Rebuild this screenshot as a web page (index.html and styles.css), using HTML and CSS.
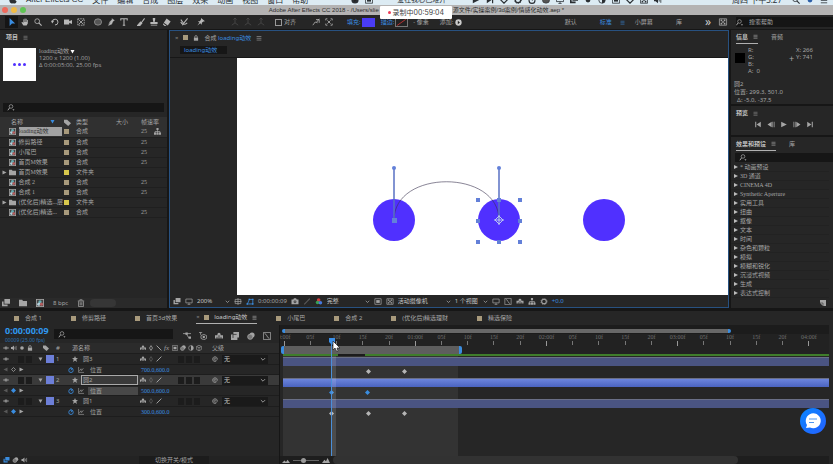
FILE: index.html
```html
<!DOCTYPE html>
<html lang="zh-CN">
  <head>
    <meta charset="UTF-8" />
    <title>After Effects - loading动效</title>
    <link rel="stylesheet" href="styles.css">
  </head>
  <body>
    <!-- icon set -->
    <svg class="defs" width="0" height="0">
      <symbol id="menu" viewBox="0 0 10 10"><path d="M1 2.500h8M1 5.500h8M1 8.500h8" stroke="currentColor" /></symbol>
      <symbol id="arrow" viewBox="0 0 10 10"><path d="M2 0v10l3-3h4z" fill="currentColor" /></symbol>
      <symbol id="hand" viewBox="0 0 10 10"><path d="M3 9.500L.500 5.500l1-.5L3 6V1.500h1V5h.500V.500h1V5H6V1h1v4h.500V2.500h1V7L7 9.500z" fill="currentColor" /></symbol>
      <symbol id="zoom" viewBox="0 0 10 10"><circle cx="4" cy="4" r="3" fill="none" stroke="currentColor" /><path d="M6 6l3.500 3.500" stroke="currentColor" stroke-width="1.400" /></symbol>
      <symbol id="find" viewBox="0 0 10 10"><circle cx="5" cy="3.500" r="2.600" fill="none" stroke="currentColor" /><path d="M3 5.500L.500 9" stroke="currentColor" stroke-width="1.400" /><path d="M7 7.500h3L8.500 9.500z" fill="currentColor" /></symbol>
      <symbol id="rotate" viewBox="0 0 10 10"><path d="M1.500 5A3.600 3.600 0 1 1 5 8.700" fill="none" stroke="currentColor" stroke-width="1.200" /><path d="M0 3.500h4L1.500 7z" fill="currentColor" /></symbol>
      <symbol id="camera" viewBox="0 0 10 10"><path d="M0 2h6.500v2L10 2.500v5L6.500 6v2H0z" fill="currentColor" /></symbol>
      <symbol id="pan" viewBox="0 0 10 10"><rect x="1" y="1" width="8" height="8" fill="none" stroke="currentColor" stroke-dasharray="2 1" /><path d="M2 2l6 6M8 2L2 8" stroke="currentColor" /></symbol>
      <symbol id="ellipse" viewBox="0 0 10 10"><ellipse cx="5" cy="5" rx="4.500" ry="4" fill="#555" stroke="currentColor" stroke-width=".7" /></symbol>
      <symbol id="pen" viewBox="0 0 10 10"><path d="M6 0l4 3-2 1-2 4-5 2 2-5 3-3zM1 9.500l3-4" fill="currentColor" stroke="#262626" stroke-width=".4" /></symbol>
      <symbol id="type" viewBox="0 0 10 10"><path d="M1 3V1h8v2M5 1v8M3.500 9h3" fill="none" stroke="currentColor" stroke-width="1.300" /></symbol>
      <symbol id="brush" viewBox="0 0 10 10"><path d="M9.500.500L5 6.500M4.500 5L6 6.500 3.500 9.500.500 9.500z" fill="currentColor" stroke="currentColor" stroke-width="1.300" /></symbol>
      <symbol id="stamp" viewBox="0 0 10 10"><path d="M3.500 0h3v2l-.7 3H9.500v2.500h-9V5h3.700l-.7-3zM1 8.500h8v1H1z" fill="currentColor" /></symbol>
      <symbol id="eraser" viewBox="0 0 10 10"><path d="M4.500.500l5 4L6 9.500 1 6z" fill="currentColor" /><path d="M0 6.500l4.500 3.500H2L0 8z" fill="currentColor" /></symbol>
      <symbol id="roto" viewBox="0 0 10 10"><path d="M9.500.500L5 6 3 9M1 2l3 4M1 5c1 3 5 4 8 1" fill="none" stroke="currentColor" stroke-width="1.300" /></symbol>
      <symbol id="pin" viewBox="0 0 10 10"><path d="M5 0l5 4-2 .5L6 6v2.500L4 6.500.500 9.500 3 5.500 1 4h2.500L5 2z" fill="currentColor" /></symbol>
      <symbol id="axis" viewBox="0 0 10 10"><path d="M5 0v6L1 9M5 6l4 3M3 2l2-2 2 2" fill="none" stroke="currentColor" /></symbol>
      <symbol id="snap" viewBox="0 0 10 10"><path d="M1 9l3-4 3 1M5 2h4v4M9 1L6 5" fill="none" stroke="currentColor" /></symbol>
      <symbol id="corners" viewBox="0 0 10 10"><path d="M1 3V1h2M7 1h2v2M9 7v2H7M3 9H1V7M3 3l4 4M7 3L3 7" fill="none" stroke="currentColor" /></symbol>
      <symbol id="add" viewBox="0 0 10 10"><circle cx="5" cy="5" r="4.500" fill="currentColor" /><path d="M4 2.500L7 5 4 7.500z" fill="#222" /></symbol>
      <symbol id="down" viewBox="0 0 10 10"><path d="M1.500 3.500L5 7l3.500-3.500" fill="none" stroke="currentColor" stroke-width="1.200" /></symbol>
      <symbol id="lock" viewBox="0 0 10 10"><path d="M3 5V3a2 2 0 0 1 4 0v2" fill="none" stroke="currentColor" stroke-width="1.300" /><rect x="1.500" y="4.500" width="7" height="5" fill="currentColor" /></symbol>
      <symbol id="tag" viewBox="0 0 10 10"><path d="M0 1h4.500L10 6 6 10 0 5z" fill="currentColor" /></symbol>
      <symbol id="comp" viewBox="0 0 10 10"><path d="M0 0h10v10H0z" fill="#a8a8a8" /><path d="M1 1h8v8H1z" fill="#444" /><circle cx="5" cy="3.500" r="2" fill="#68aeb4" /><circle cx="3.500" cy="6.500" r="2" fill="#b3d3df" /><circle cx="6.800" cy="6.500" r="2" fill="#b65f60" /></symbol>
      <symbol id="folder" viewBox="0 0 10 10"><path d="M0 1h4l1 1.500h5V9H0z" fill="currentColor" /></symbol>
      <symbol id="tree" viewBox="0 0 10 10"><path d="M3.500 0h3v3h-3zM0 6.500h3v3H0zM7 6.500h3v3H7zM3.500 6.500h3v3h-3z" fill="currentColor" /><path d="M5 3v4M1.500 7V5h7v2" fill="none" stroke="currentColor" /></symbol>
      <symbol id="right" viewBox="0 0 10 10"><path d="M1 1l8 4-8 4z" fill="currentColor" /></symbol>
      <symbol id="left" viewBox="0 0 10 10"><path d="M9 1L1 5l8 4z" fill="currentColor" /></symbol>
      <symbol id="fold" viewBox="0 0 10 10"><path d="M1 2h8L5 9z" fill="currentColor" /></symbol>
      <symbol id="first" viewBox="0 0 10 10"><path d="M1 1h1.500v8H1zM9 1v8L3 5z" fill="currentColor" /></symbol>
      <symbol id="back" viewBox="0 0 10 10"><path d="M6 1v8L0 5zM7 1h1v8H7zM9 1h1v8H9z" fill="currentColor" /></symbol>
      <symbol id="fwd" viewBox="0 0 10 10"><path d="M4 1v8l6-4zM0 1h1v8H0zM2 1h1v8H2z" fill="currentColor" /></symbol>
      <symbol id="last" viewBox="0 0 10 10"><path d="M1 1v8l6-4zM7.500 1H9v8H7.500z" fill="currentColor" /></symbol>
      <symbol id="layers" viewBox="0 0 10 10"><path d="M3 0h7v6H3zM0 3h2v4h5v2H0z" fill="currentColor" /></symbol>
      <symbol id="screen" viewBox="0 0 10 10"><path d="M.500 1.500h9v5.500h-9zM3 9.500h4M5 7v2" fill="none" stroke="currentColor" /></symbol>
      <symbol id="grid" viewBox="0 0 10 10"><path d="M1 2h8v6H1zM5 0v10M0 5h10" fill="none" stroke="currentColor" /></symbol>
      <symbol id="mask" viewBox="0 0 10 10"><path d="M1 8.500h8V2H4Q3 6 1 8.500z" fill="none" stroke="currentColor" stroke-width="1.200" /><path d="M0 7.500h2v2H0zM8 7.500h2v2H8zM8 1h2v2H8zM3 1h2v2H3z" fill="currentColor" /></symbol>
      <symbol id="photo" viewBox="0 0 10 10"><path d="M0 2h2.500l1-1.500h3l1 1.500H10v7H0z" fill="currentColor" /><circle cx="5" cy="5.500" r="2" fill="#333" /><circle cx="5" cy="5.500" r="1" fill="currentColor" /></symbol>
      <symbol id="rgb" viewBox="0 0 10 10"><circle cx="4.500" cy="3" r="2.600" fill="#d23c3c" /><circle cx="3" cy="6.500" r="2.600" fill="#3aa052" /><circle cx="7" cy="6.800" r="2.600" fill="#4478e0" /></symbol>
      <symbol id="box" viewBox="0 0 10 10"><path d="M.500 1h9v8h-9z" fill="none" stroke="currentColor" /><path d="M2.500 3h5v4h-5z" fill="currentColor" /></symbol>
      <symbol id="checker" viewBox="0 0 10 10"><path d="M.500 1h9v8h-9z" fill="none" stroke="currentColor" /><path d="M2 2h2v2H2zM6 2h2v2H6zM4 4h2v2H4zM2 6h2v2H2zM6 6h2v2H6z" fill="currentColor" /></symbol>
      <symbol id="gear" viewBox="0 0 10 10"><circle cx="5" cy="5" r="3.300" fill="none" stroke="currentColor" stroke-width="1.500" /><circle cx="5" cy="5" r="4.400" fill="none" stroke="currentColor" stroke-dasharray="1.500 1.300" /></symbol>
      <symbol id="trash" viewBox="0 0 10 10"><path d="M1 2.500h8M3.500 2V1h3v1M2 3v6.500h6V3M4 4v4M6 4v4" fill="none" stroke="currentColor" /></symbol>
      <symbol id="flow" viewBox="0 0 10 10"><path d="M0 2h4l3 5h1M4 2h6" fill="none" stroke="currentColor" /><path d="M3 .500h3v3H3zM7 5.500h3v3H7z" fill="currentColor" /></symbol>
      <symbol id="cube" viewBox="0 0 10 10"><path d="M5 .500l4 2v5l-4 2-4-2v-5zM1 2.500l4 2 4-2M5 4.500v5" fill="none" stroke="currentColor" /></symbol>
      <symbol id="orbit" viewBox="0 0 10 10"><path d="M0 .500h4M2 .500v3" stroke="currentColor" /><path d="M6 3l3.500 1.500v3.500L6 9.700 2.500 8V4.500z" fill="none" stroke="currentColor" /><circle cx="6" cy="6.300" r="1.500" fill="currentColor" /></symbol>
      <symbol id="shy" viewBox="0 0 10 10"><path d="M3 3a2 2 0 0 1 4 0v1h3v4H0V4h3z" fill="currentColor" /><path d="M5 4v5M2.500 6v3M7.500 6v3" stroke="#262626" /></symbol>
      <symbol id="blend" viewBox="0 0 10 10"><path d="M3 0h7v7H8v3H0V3h3z" fill="currentColor" /><path d="M2.500 7.500V3H7" fill="none" stroke="#333" /></symbol>
      <symbol id="blur" viewBox="0 0 10 10"><circle cx="6.300" cy="3.700" r="3.200" fill="currentColor" /><circle cx="4" cy="6" r="3.200" fill="#777" stroke="currentColor" /></symbol>
      <symbol id="graph" viewBox="0 0 10 10"><path d="M.500.500h9v9h-9zM2 2c3 0 3 6 6 6" fill="none" stroke="currentColor" /></symbol>
      <symbol id="eye" viewBox="0 0 10 10"><path d="M.500 5Q5 .500 9.500 5 5 9.500.500 5z" fill="none" stroke="currentColor" /><circle cx="5" cy="5" r="1.600" fill="currentColor" /></symbol>
      <symbol id="sound" viewBox="0 0 10 10"><path d="M0 3.500h2L5 1v8L2 6.500H0z" fill="currentColor" /><path d="M6.500 3v4M8.500 1.500v7" stroke="currentColor" /></symbol>
      <symbol id="dot" viewBox="0 0 10 10"><circle cx="5" cy="5" r="3" fill="currentColor" /></symbol>
      <symbol id="star" viewBox="0 0 10 10"><path d="M5 0l1.400 3.500L10 3.800 7.200 6 8.200 9.800 5 7.700 1.800 9.800 2.800 6 0 3.800l3.600-.3z" fill="currentColor" /></symbol>
      <symbol id="sun" viewBox="0 0 10 10"><path d="M5 1l2.500 4L5 9 2.500 5z" fill="none" stroke="currentColor" stroke-width="1.300" /></symbol>
      <symbol id="slash" viewBox="0 0 10 10"><path d="M1 9l8-8" stroke="currentColor" stroke-width="1.600" /></symbol>
      <symbol id="bslash" viewBox="0 0 10 10"><path d="M1 1l8 8" stroke="currentColor" stroke-width="1.600" /></symbol>
      <symbol id="half" viewBox="0 0 10 10"><circle cx="5" cy="5" r="4" fill="none" stroke="currentColor" /><path d="M5 1a4 4 0 0 1 0 8z" fill="currentColor" /></symbol>
      <symbol id="watch" viewBox="0 0 10 10"><circle cx="5" cy="5.500" r="3.700" fill="none" stroke="currentColor" stroke-width="1.400" /><path d="M4 .500h2M5 5.500l2.500-3.500" stroke="currentColor" stroke-width="1.400" /></symbol>
      <symbol id="chart" viewBox="0 0 10 10"><path d="M1 0v9h9M2 7l3-4 1 3 3-4" fill="none" stroke="currentColor" /></symbol>
      <symbol id="whip" viewBox="0 0 10 10"><path d="M7 5a2 2 0 1 0-2 2c2 0 3 0 4-1M9 5.500A4 4 0 1 0 7 8.700" fill="none" stroke="currentColor" stroke-width="1.200" /></symbol>
      <symbol id="key" viewBox="0 0 10 10"><path d="M5 0l5 5-5 5-5-5z" fill="currentColor" /></symbol>
      <symbol id="keyo" viewBox="0 0 10 10"><path d="M5 1l4 4-4 4-4-4z" fill="none" stroke="currentColor" stroke-width="1.500" /></symbol>
      <symbol id="page" viewBox="0 0 10 10"><path d="M0 0h10v10H5L0 5z" fill="currentColor" /><path d="M5 10V5H0" fill="none" stroke="#333" /></symbol>
      <symbol id="apple" viewBox="0 0 10 10"><path d="M5 2.500C2 1 0 3 .500 6S3 10 5 9c2 1 4 0 4.500-2.500C7 5.500 8 3 9 3 8 1.500 6 2 5 2.500z" fill="currentColor" /></symbol>
    </svg>

    <nav class="menubar">
      <svg class="ico"><use href="#apple" /></svg>
      <a href="#" class="app">After Effects CC</a>
      <a href="#">文件</a><a href="#">编辑</a><a href="#">合成</a><a href="#">图层</a><a href="#">效果</a><a href="#">动画</a><a href="#">视图</a><a href="#">窗口</a><a href="#">帮助</a>
      <div class="status">
        <svg class="ico"><use href="#add" /></svg>
        <svg class="ico"><use href="#box" /></svg>
        <span class="song">爱在我心已难开</span>
        <svg class="ico"><use href="#right" /></svg>
        <svg class="ico"><use href="#last" /></svg>
        <svg class="ico"><use href="#keyo" /></svg>
        <svg class="ico"><use href="#gear" /></svg>
        <svg class="ico"><use href="#watch" /></svg>
        <svg class="ico"><use href="#ellipse" /></svg>
        <svg class="ico"><use href="#screen" /></svg>
        <svg class="ico"><use href="#layers" /></svg>
        <svg class="ico"><use href="#dot" /></svg>
        <svg class="ico"><use href="#half" /></svg>
        <svg class="ico"><use href="#box" /></svg>
        <svg class="ico"><use href="#keyo" /></svg>
        <svg class="ico"><use href="#checker" /></svg>
        <svg class="ico"><use href="#sound" /></svg>
        <span class="clock">周四 下午3:27</span>
        <svg class="ico"><use href="#zoom" /></svg>
        <svg class="ico siri"><use href="#dot" /></svg>
        <svg class="ico"><use href="#menu" /></svg>
      </div>
    </nav>

    <header class="titlebar">
      <div class="lights"><i class="red"></i><i class="amber"></i><i class="green"></i></div>
      <span>Adobe After Effects CC 2018 - /Users/slie</span>
      <div class="rec"><i></i>录制中00:59:04</div>
      <span>源文件/实操案例/3d案例/情感化动效.aep *</span>
    </header>

    <div class="toolbar">
      <div class="tools">
        <button class="on"><svg class="ico"><use href="#arrow" /></svg></button><button><svg class="ico"><use href="#hand" /></svg></button><button><svg class="ico"><use href="#zoom" /></svg></button>
      </div>
      <div class="tools">
        <button><svg class="ico"><use href="#rotate" /></svg></button><button><svg class="ico"><use href="#camera" /></svg></button><button><svg class="ico"><use href="#pan" /></svg></button>
      </div>
      <div class="tools">
        <button><svg class="ico"><use href="#ellipse" /></svg></button><button><svg class="ico"><use href="#pen" /></svg></button><button><svg class="ico"><use href="#type" /></svg></button>
      </div>
      <div class="tools">
        <button><svg class="ico"><use href="#brush" /></svg></button><button><svg class="ico"><use href="#stamp" /></svg></button><button><svg class="ico"><use href="#eraser" /></svg></button>
      </div>
      <div class="tools"><button><svg class="ico"><use href="#roto" /></svg></button></div>
      <div class="tools"><button><svg class="ico"><use href="#pin" /></svg></button></div>
      <div class="tools dim">
        <button><svg class="ico"><use href="#axis" /></svg></button><button><svg class="ico"><use href="#axis" /></svg></button><button><svg class="ico"><use href="#axis" /></svg></button>
      </div>
      <label class="check"><input type="checkbox">对齐</label>
      <div class="tools">
        <button><svg class="ico"><use href="#snap" /></svg></button><button><svg class="ico"><use href="#corners" /></svg></button>
      </div>
      <div class="fills">
        <a href="#">填充:</a><button class="fill"></button>
        <a href="#" class="stroke">描边:</a><button class="none"><svg viewBox="0 0 12 8"><path d="M1 7.500L11 .500" stroke="#c33" /></svg></button>
        <span class="px">- 像素</span><span class="plus">添加:</span><svg class="ico"><use href="#add" /></svg>
      </div>
      <div class="spaces">
        <button>默认</button>
        <button class="cur">标准 <svg class="ico"><use href="#menu" /></svg></button>
        <button>小屏幕</button>
        <button>库</button>
        <button class="more">»</button>
        <svg class="ico sync"><use href="#checker" /></svg>
      </div>
      <label class="help"><svg class="ico"><use href="#find" /></svg><input type="text" placeholder="搜索帮助"></label>
    </div>

    <main class="work">
      <section class="panel project">
        <div class="tabs"><b>项目</b><svg class="ico"><use href="#menu" /></svg></div>
        <div class="preview">
          <div class="thumb"><i></i><i></i><i></i></div>
          <div>
            <p>loading动效 <svg class="ico"><use href="#fold" /></svg></p>
            <p class="lt">1200 x 1200 (1.00)</p>
            <p class="lt">Δ 0:00:05:00, 25.00 fps</p>
          </div>
        </div>
        <label class="search"><svg class="ico"><use href="#find" /></svg><input type="text" aria-label="搜索项目"></label>
        <table class="files">
          <thead>
            <tr><th class="c-arr"></th><th class="c-name" colspan="2">名称 <svg class="ico blue"><use href="#fold" /></svg></th><th class="c-tag"><svg class="ico"><use href="#tag" /></svg></th><th class="c-type">类型</th><th class="c-size">大小</th><th class="c-rate" colspan="2">帧速率</th></tr>
          </thead>
          <tbody>
            <tr class="sel"><td></td><td><svg class="ico"><use href="#comp" /></svg></td><td class="nm"><span>loading动效</span></td><td><i class="chip"></i></td><td>合成</td><td></td><td>25</td><td><svg class="ico"><use href="#tree" /></svg></td></tr>
            <tr><td></td><td><svg class="ico"><use href="#comp" /></svg></td><td class="nm"><span>修剪路径</span></td><td><i class="chip"></i></td><td>合成</td><td></td><td>25</td><td></td></tr>
            <tr><td></td><td><svg class="ico"><use href="#comp" /></svg></td><td class="nm"><span>小尾巴</span></td><td><i class="chip"></i></td><td>合成</td><td></td><td>25</td><td></td></tr>
            <tr><td></td><td><svg class="ico"><use href="#comp" /></svg></td><td class="nm"><span>首页M效果</span></td><td><i class="chip"></i></td><td>合成</td><td></td><td>25</td><td></td></tr>
            <tr><td><svg class="ico tri"><use href="#right" /></svg></td><td><svg class="ico"><use href="#folder" /></svg></td><td class="nm"><span>首页M效果</span></td><td><i class="chip yel"></i></td><td>文件夹</td><td></td><td></td><td></td></tr>
            <tr><td></td><td><svg class="ico"><use href="#comp" /></svg></td><td class="nm"><span>合成 2</span></td><td><i class="chip"></i></td><td>合成</td><td></td><td>25</td><td></td></tr>
            <tr><td></td><td><svg class="ico"><use href="#comp" /></svg></td><td class="nm"><span>合成 1</span></td><td><i class="chip"></i></td><td>合成</td><td></td><td>25</td><td></td></tr>
            <tr><td><svg class="ico tri"><use href="#right" /></svg></td><td><svg class="ico"><use href="#folder" /></svg></td><td class="nm"><span>(优化后)精选...层</span></td><td><i class="chip yel"></i></td><td>文件夹</td><td></td><td></td><td></td></tr>
            <tr><td></td><td><svg class="ico"><use href="#comp" /></svg></td><td class="nm"><span>(优化后)精选...</span></td><td><i class="chip"></i></td><td>合成</td><td></td><td>25</td><td></td></tr>
          </tbody>
        </table>
        <div class="foot">
          <svg class="ico"><use href="#layers" /></svg>
          <svg class="ico"><use href="#folder" /></svg>
          <svg class="ico"><use href="#comp" /></svg>
          <span>8 bpc</span>
          <svg class="ico"><use href="#trash" /></svg>
          <i class="scroll"></i>
        </div>
      </section>

      <section class="panel viewer">
        <div class="tabs">
          <span class="x">×</span><i class="chip"></i><svg class="ico"><use href="#lock" /></svg>
          <span>合成 <a href="#">loading动效</a></span><svg class="ico"><use href="#menu" /></svg>
        </div>
        <div class="crumb"><a href="#">loading动效</a></div>
        <div class="stage">
          <svg>
            <g fill="#5030ff"><circle cx="157" cy="162" r="21" /><circle cx="262" cy="162" r="21" /><circle cx="367" cy="162" r="21" /></g>
            <path d="M157 162C157 111 262 111 262 162" fill="none" stroke="#39324f" stroke-opacity=".75" stroke-width=".8" />
            <g fill="#6380d8">
              <path d="M157 111v51M262 111v51" stroke="#5a72c4" stroke-width="1.500" />
              <circle cx="157" cy="110" r="2" /><circle cx="262" cy="110" r="2" />
              <path d="M155 160h5v5h-5z" />
              <path d="M239 140h4v4h-4zM260 140h4v4h-4zM281 140h4v4h-4zM239 161h4v4h-4zM281 161h4v4h-4zM239 182h4v4h-4zM260 182h4v4h-4zM281 182h4v4h-4z" />
            </g>
            <path d="M262 158l4 4-4 4-4-4zM262 157v10M257 162h10" fill="none" stroke="#b9c6f0" />
          </svg>
        </div>
        <div class="foot">
          <svg class="ico"><use href="#layers" /></svg>
          <svg class="ico"><use href="#screen" /></svg>
          <label class="pick w1"><select aria-label="放大率"><option>200%</option></select><svg class="ico"><use href="#down" /></svg></label>
          <svg class="ico"><use href="#grid" /></svg>
          <svg class="ico blue"><use href="#mask" /></svg>
          <span class="tc">0:00:00:09</span>
          <svg class="ico"><use href="#photo" /></svg>
          <svg class="ico off"><use href="#slash" /></svg>
          <svg class="ico"><use href="#rgb" /></svg>
          <label class="pick w2"><select aria-label="分辨率"><option>完整</option></select><svg class="ico"><use href="#down" /></svg></label>
          <svg class="ico"><use href="#box" /></svg>
          <svg class="ico"><use href="#checker" /></svg>
          <label class="pick w3"><select aria-label="3D 视图"><option>活动摄像机</option></select><svg class="ico"><use href="#down" /></svg></label>
          <label class="pick w1"><select aria-label="视图布局"><option>1 个视图</option></select><svg class="ico"><use href="#down" /></svg></label>
          <svg class="ico"><use href="#screen" /></svg>
          <svg class="ico"><use href="#graph" /></svg>
          <svg class="ico"><use href="#shy" /></svg>
          <svg class="ico"><use href="#tree" /></svg>
          <svg class="ico"><use href="#gear" /></svg>
          <a href="#">+0.0</a>
        </div>
      </section>

      <aside class="side">
        <section class="panel info">
          <div class="tabs"><b class="act">信息 <svg class="ico"><use href="#menu" /></svg></b><span>音频</span></div>
          <div class="values">
            <i class="sample"></i>
            <p>R:<br>G:<br>B:<br>A: &nbsp;0</p>
            <span class="cross">+</span>
            <p>X: 266<br>Y: 741</p>
          </div>
          <div class="sel-info">圆2<br>位置: 299.3, 501.0<br>&nbsp; Δ: -5.0, -37.5</div>
        </section>
        <section class="panel play">
          <div class="tabs"><b>预览</b><svg class="ico"><use href="#menu" /></svg></div>
          <div class="btns">
            <button><svg class="ico"><use href="#first" /></svg></button><button><svg class="ico"><use href="#back" /></svg></button><button><svg class="ico"><use href="#right" /></svg></button><button><svg class="ico"><use href="#fwd" /></svg></button><button><svg class="ico"><use href="#last" /></svg></button>
          </div>
        </section>
        <section class="panel effects">
          <div class="tabs"><b class="act">效果和预设 <svg class="ico"><use href="#menu" /></svg></b><span>库</span></div>
          <label class="search"><svg class="ico"><use href="#find" /></svg><input type="text" aria-label="搜索效果"></label>
          <ul>
            <li>* 动画预设</li>
            <li>3D 通道</li>
            <li>CINEMA 4D</li>
            <li>Synthetic Aperture</li>
            <li>实用工具</li>
            <li>扭曲</li>
            <li>抠像</li>
            <li>文本</li>
            <li>时间</li>
            <li>杂色和颗粒</li>
            <li>模拟</li>
            <li>模糊和锐化</li>
            <li>沉浸式视频</li>
            <li>生成</li>
            <li>表达式控制</li>
          </ul>
          <div class="foot"><svg class="ico"><use href="#page" /></svg></div>
        </section>
      </aside>
    </main>

    <section class="timeline">
      <div class="comps">
        <a href="#"><i class="chip"></i>合成 1</a>
        <a href="#"><i class="chip"></i>修剪路径</a>
        <a href="#"><i class="chip"></i>首页3d效果</a>
        <a href="#" class="act"><span class="x">×</span><i class="chip"></i>loading动效<svg class="ico"><use href="#menu" /></svg></a>
        <a href="#"><i class="chip"></i>小尾巴</a>
        <a href="#"><i class="chip"></i>合成 2</a>
        <a href="#"><i class="chip"></i>(优化后)精选理财</a>
        <a href="#"><i class="chip"></i>精选保险</a>
      </div>

      <div class="layers">
        <div class="ctrl">
          <div class="time"><b>0:00:00:09</b><small>00009 (25.00 fps)</small></div>
          <label class="search"><svg class="ico"><use href="#find" /></svg><input type="text" aria-label="搜索图层"></label>
          <div class="modes">
            <button><svg class="ico"><use href="#flow" /></svg></button><button><svg class="ico"><use href="#orbit" /></svg></button><button><svg class="ico"><use href="#shy" /></svg></button><button><svg class="ico"><use href="#blend" /></svg></button><button><svg class="ico"><use href="#blur" /></svg></button><button><svg class="ico"><use href="#graph" /></svg></button>
          </div>
        </div>
        <div class="row head">
          <span class="av"><svg class="ico"><use href="#eye" /></svg><svg class="ico"><use href="#sound" /></svg><svg class="ico"><use href="#dot" /></svg><svg class="ico"><use href="#lock" /></svg></span>
          <span class="lab"><svg class="ico"><use href="#tag" /></svg></span>
          <span class="no">#</span>
          <span class="src">源名称</span>
          <span class="sw"><svg class="ico"><use href="#shy" /></svg><svg class="ico"><use href="#sun" /></svg><svg class="ico"><use href="#bslash" /></svg><em>fx</em><svg class="ico"><use href="#box" /></svg><svg class="ico"><use href="#blur" /></svg><svg class="ico"><use href="#half" /></svg><svg class="ico"><use href="#cube" /></svg></span>
          <span class="par">父级</span>
        </div>
        <div class="row layer">
          <span class="av"><svg class="ico"><use href="#eye" /></svg><i></i><i></i></span>
          <span class="lab"><svg class="ico tri"><use href="#fold" /></svg><i class="chip vio"></i></span>
          <span class="no">1</span>
          <span class="src"><svg class="ico"><use href="#star" /></svg><span class="nm">圆3</span></span>
          <span class="sw"><svg class="ico"><use href="#shy" /></svg><svg class="ico off"><use href="#sun" /></svg><svg class="ico"><use href="#slash" /></svg><i class="first"></i><i></i><i></i></span>
          <span class="par"><svg class="ico"><use href="#whip" /></svg><label class="pick"><select aria-label="圆3 父级"><option>无</option></select><svg class="ico"><use href="#down" /></svg></label></span>
        </div>
        <div class="row prop">
          <span class="nav"><svg class="ico off"><use href="#left" /></svg><svg class="ico"><use href="#keyo" /></svg><svg class="ico"><use href="#right" /></svg></span>
          <span class="pn"><svg class="ico blue"><use href="#watch" /></svg><svg class="ico"><use href="#chart" /></svg><span class="nm">位置</span></span>
          <a href="#">700.0,600.0</a>
        </div>
        <div class="row layer sel">
          <span class="av"><svg class="ico"><use href="#eye" /></svg><i></i><i></i></span>
          <span class="lab"><svg class="ico tri"><use href="#fold" /></svg><i class="chip vio"></i></span>
          <span class="no">2</span>
          <span class="src"><svg class="ico"><use href="#star" /></svg><span class="nm">圆2</span></span>
          <span class="sw"><svg class="ico"><use href="#shy" /></svg><svg class="ico off"><use href="#sun" /></svg><svg class="ico"><use href="#slash" /></svg><i class="first"></i><i></i><i></i></span>
          <span class="par"><svg class="ico"><use href="#whip" /></svg><label class="pick"><select aria-label="圆2 父级"><option>无</option></select><svg class="ico"><use href="#down" /></svg></label></span>
        </div>
        <div class="row prop sel">
          <span class="nav"><svg class="ico off"><use href="#left" /></svg><svg class="ico blue"><use href="#key" /></svg><svg class="ico"><use href="#right" /></svg></span>
          <span class="pn"><svg class="ico blue"><use href="#watch" /></svg><svg class="ico"><use href="#chart" /></svg><span class="nm">位置</span></span>
          <a href="#">500.0,600.0</a>
        </div>
        <div class="row layer">
          <span class="av"><svg class="ico"><use href="#eye" /></svg><i></i><i></i></span>
          <span class="lab"><svg class="ico tri"><use href="#fold" /></svg><i class="chip vio"></i></span>
          <span class="no">3</span>
          <span class="src"><svg class="ico"><use href="#star" /></svg><span class="nm">圆1</span></span>
          <span class="sw"><svg class="ico"><use href="#shy" /></svg><svg class="ico off"><use href="#sun" /></svg><svg class="ico"><use href="#slash" /></svg><i class="first"></i><i></i><i></i></span>
          <span class="par"><svg class="ico"><use href="#whip" /></svg><label class="pick"><select aria-label="圆1 父级"><option>无</option></select><svg class="ico"><use href="#down" /></svg></label></span>
        </div>
        <div class="row prop">
          <span class="nav"><svg class="ico off"><use href="#left" /></svg><svg class="ico blue"><use href="#key" /></svg><svg class="ico"><use href="#right" /></svg></span>
          <span class="pn"><svg class="ico blue"><use href="#watch" /></svg><svg class="ico"><use href="#chart" /></svg><span class="nm">位置</span></span>
          <a href="#">300.0,600.0</a>
        </div>
        <div class="foot">
          <svg class="ico blue"><use href="#layers" /></svg><svg class="ico"><use href="#blur" /></svg><svg class="ico"><use href="#sound" /></svg>
          <button>切换开关/模式</button>
        </div>
      </div>

      <div class="graph">
        <div class="navi"><i></i></div>
        <div class="ruler">
          <span class="s">0:00f</span><span>05f</span><span>10f</span><span>15f</span><span>20f</span><span class="s">01:00f</span><span>05f</span><span>10f</span><span>15f</span><span>20f</span><span class="s">02:00f</span><span>05f</span><span>10f</span><span>15f</span><span>20f</span><span class="s">03:00f</span><span>05f</span><span>10f</span><span>15f</span><span>20f</span><span class="s">04:00f</span>
        </div>
        <div class="area"><i></i></div>
        <div class="lanes">
          <div class="cache"></div>
          <div class="bar"></div>
          <div class="keys"><svg class="ico" style="left:15.5%"><use href="#key" /></svg><svg class="ico" style="left:22.2%"><use href="#key" /></svg></div>
          <div class="bar sel"></div>
          <div class="keys blue"><svg class="ico" style="left:8.8%"><use href="#key" /></svg><svg class="ico" style="left:15.4%"><use href="#key" /></svg></div>
          <div class="bar"></div>
          <div class="keys"><svg class="ico" style="left:8.8%"><use href="#key" /></svg><svg class="ico" style="left:15.5%"><use href="#key" /></svg><svg class="ico" style="left:22.2%"><use href="#key" /></svg></div>
          <div class="head" style="left:8.8%"><svg viewBox="0 0 12 14"><path d="M1 0h6v4L4 7 1 4z" fill="#3c8fe8" /><path d="M5 3v9l2-2 2 4 1-1-1-3h3z" fill="#fff" stroke="#222" stroke-width=".7" /></svg></div>
        </div>
        <div class="foot">
          <svg class="hills" viewBox="0 0 10 6"><path d="M0 6l3-3 2 2 2-3 3 4z" fill="currentColor" /></svg>
          <input type="range" min="0" max="100" value="40" aria-label="缩放">
          <svg class="hills" viewBox="0 0 10 6"><path d="M0 6l3-4 2 2 2-4 3 6z" fill="currentColor" /></svg>
          <i class="scroll"></i>
        </div>
      </div>
    </section>

    <button class="chat" aria-label="聊天">
      <svg viewBox="0 0 26 26"><path d="M6 20l1-3a7.500 7.500 0 1 1 3 2.600z" fill="#fff" /><path d="M9 11h8M9 14.500h5" stroke="#4d96f0" stroke-width="1.200" /></svg>
    </button>
  </body>
</html>
```
FILE: styles.css
```css
*{margin: 0;padding: 0;box-sizing: border-box}
body{
  display: flex;
  flex-direction: column;
  height: 100vh;
  overflow: hidden;
  background: #161616;
  color: #a5a5a5;
  font: 6px/8px "Noto Sans", "Noto Sans CJK SC", sans-serif;
}
a{
  color: #3a8de0;
  text-decoration: none;
}
button, input, select{
  font: inherit;
  color: inherit;
  background: none;
  border: 0;
}
ul{
  list-style: none;
}
i, em{
  font-style: normal;
  flex: none;
}
.defs{
  position: absolute;
}
.ico{
  display: block;
  flex: none;
  width: 8px;
  height: 8px;
}
.blue{
  color: #3a8de0;
}
.off{
  opacity: .4;
}
.chip{
  display: block;
  width: 5px;
  height: 5px;
  background: #a89a7c;
}
.yel{
  background: #d8c84c;
}
.vio{
  width: 8px;
  height: 8px;
  background: #6d7fd8;
}

/* mac menu bar */
.menubar{
  display: flex;
  align-items: flex-end;
  flex: none;
  gap: 9px;
  height: 5px;
  padding: 0 5px 1px 9px;
  overflow: hidden;
  background: #dcebf3;
  color: #2a2f33;
  font-size: 8px;
  white-space: nowrap;
}
.menubar a{
  color: inherit;
}
.menubar .app{
  font-family: "Liberation Sans", sans-serif;
}
.status{
  display: flex;
  align-items: flex-end;
  flex: 1;
  gap: 6px;
  margin-left: 34px;
}
.song{
  margin: 0 20px 0 18px;
  font-size: 7px;
}
.clock{
  margin-left: auto;
  margin-right: 4px;
}
.status .siri{
  color: #2c5fa8;
}

/* window title */
.titlebar{
  position: relative;
  display: flex;
  align-items: center;
  justify-content: center;
  flex: none;
  gap: 1px;
  height: 10px;
  background: #b4b3b3;
  color: #2d2d2d;
  font-family: "Liberation Sans", "Noto Sans CJK SC", sans-serif;
  white-space: nowrap;
}
.lights{
  position: absolute;
  left: 2px;
  display: flex;
  gap: 3px;
}
.lights i{
  width: 6px;
  height: 6px;
  border-radius: 50%;
}
.red{background: #ee6a5c}
.amber{background: #f0bb45}
.green{background: #5fc454}
.rec{
  display: flex;
  align-items: center;
  justify-content: center;
  flex: none;
  align-self: flex-start;
  gap: 2px;
  width: 72px;
  height: 13px;
  margin-top: 1px;
  border-radius: 1px;
  background: #fff;
  color: #444;
  font: 7px/13px Inter, "Noto Sans CJK SC", sans-serif;
  z-index: 2;
}
.rec i{
  width: 3px;
  height: 3px;
  border-radius: 50%;
  background: #ee3b55;
}

/* tools */
.toolbar{
  display: flex;
  align-items: center;
  flex: none;
  height: 14px;
  padding-left: 5px;
  background: #262626;
  white-space: nowrap;
}
.tools{
  display: flex;
  margin-right: 4px;
}
.tools button{
  display: flex;
  align-items: center;
  justify-content: center;
  width: 13px;
  height: 12px;
  color: #b8b8b8;
}
.tools .on{
  background: #151515;
  color: #3a8de0;
}
.tools.dim{
  margin: 0 8px 0 17px;
  opacity: .25;
}
.check{
  display: flex;
  align-items: center;
  gap: 2px;
  margin-right: 13px;
}
.check input{
  appearance: none;
  width: 7px;
  height: 7px;
  border: 1px solid #999;
}
.fills{
  display: flex;
  align-items: center;
  margin-left: 8px;
}
.fill, .none{
  width: 13px;
  height: 9px;
  margin-left: 1px;
  background: #4a3cf5;
}
.none{
  display: flex;
  background: #222;
  border: 1px solid #777;
}
.stroke{
  margin-left: 6px;
}
.px{
  margin: 0 11px 0 5px;
}
.plus{
  margin-right: 2px;
}
.fills .ico{
  width: 7px;
  height: 7px;
  color: #ccc;
}
.spaces{
  display: flex;
  align-items: center;
  gap: 23px;
  margin-left: auto;
  margin-right: 8px;
}
.spaces button{
  display: flex;
  align-items: center;
  gap: 8px;
}
.spaces .cur{
  color: #3a8de0;
  margin-right: -13px;
}
.spaces .cur .ico{
  width: 5px;
  height: 5px;
}
.spaces .more{
  font-size: 12px;
  color: #ccc;
}
.spaces .sync{
  width: 10px;
  margin-left: -16px;
}
.help{
  display: flex;
  align-items: center;
  gap: 6px;
  width: 97px;
  height: 10px;
  background: #151515;
}
.help .ico{
  width: 7px;
  height: 7px;
}
.help input{
  width: 70px;
}
input::placeholder{
  color: #a5a5a5;
}

/* panels */
.work{
  display: grid;
  grid-template-columns: 167px 1fr 102px;
  gap: 2px;
  flex: 1;
  min-height: 0;
  padding-top: 1px;
}
.panel{
  display: flex;
  flex-direction: column;
  min-width: 0;
  background: #262626;
}
.tabs{
  display: flex;
  align-items: center;
  flex: none;
  height: 14px;
  gap: 5px;
  padding: 0 6px;
}
.tabs b{
  color: #c0c0c0;
}
.tabs .ico, .act .ico{
  width: 5px;
  height: 5px;
}
.act{
  display: flex;
  align-items: center;
  gap: 5px;
  height: 14px;
  border-bottom: 1px solid #b0b0b0;
}
.tabs .act + span{
  margin-left: 8px;
}
.search{
  display: flex;
  align-items: center;
  flex: none;
  gap: 3px;
  height: 9px;
  padding: 0 4px;
  background: #161616;
}
.search .ico{
  width: 8px;
  height: 7px;
}
.search input{
  flex: 1;
  min-width: 0;
  height: 8px;
}
.foot{
  display: flex;
  align-items: center;
  flex: none;
  height: 10px;
}
.preview{
  display: flex;
  gap: 3px;
  height: 59px;
  padding: 4px 3px;
  font: 6px/7px "Liberation Serif", "Noto Sans CJK SC", serif;
}
.preview .lt{
  font-family: "Open Sans", sans-serif;
}
.preview p{
  display: flex;
  align-items: center;
  gap: 1px;
  height: 7px;
}
.preview p .ico{
  width: 5px;
  height: 5px;
  color: #fff;
}
.thumb{
  display: flex;
  align-items: center;
  justify-content: center;
  gap: 2px;
  width: 33px;
  height: 33px;
  background: #fff;
}
.thumb i{
  width: 3px;
  height: 3px;
  border-radius: 50%;
  background: #5030ff;
}
.project .search{
  margin: 0 3px 5px;
}
.files{
  width: 100%;
  table-layout: fixed;
  border-collapse: collapse;
  font: 6px/9px "Liberation Serif", "Noto Sans CJK SC", serif;
}
.files th{
  height: 10px;
  background: #303030;
  font-weight: normal;
  text-align: left;
}
.files td{
  height: 10px;
  border-bottom: 1px solid #1f1f1f;
  white-space: nowrap;
}
.files .c-arr{width: 9px}
.files .c-name{
  width: 55px;
  padding-left: 2px;
}
.files .c-name .ico{
  display: inline-block;
  width: 5px;
  height: 5px;
  margin-left: 25px;
}
.files .c-tag{width: 12px}
.files .c-type{width: 40px}
.files .c-size{width: 25px}
.files .c-rate{width: 26px}
.files .ico{
  width: 7px;
  height: 7px;
}
.files .tri{
  width: 5px;
  height: 5px;
  margin-left: 2px;
}
.files .nm{
  position: relative;
}
.files .nm span{
  position: absolute;
  top: 0;
  left: -18px;
}
.files .sel td{
  background: #303030;
}
.files .sel .nm span{
  width: 43px;
  background: #a2a2a2;
  color: #333;
}
.project .foot{
  gap: 9px;
  margin-top: auto;
  padding-left: 2px;
  background: #2a2a2a;
}
.scroll{
  height: 8px;
  border-radius: 4px;
  background: #363636;
}
.project .scroll{
  width: 26px;
  margin-left: -4px;
}

/* composition viewer */
.viewer{
  border: 1px solid #285180;
}
.viewer .tabs{
  height: 13px;
  padding: 0 5px;
}
.x{
  color: #888;
}
.viewer .tabs .ico{
  width: 6px;
  height: 6px;
}
.crumb{
  height: 14px;
  padding: 2px 10px 0;
  border-bottom: 1px solid #171717;
}
.crumb a{
  display: block;
  width: 47px;
  padding-left: 4px;
  background: #161616;
}
.stage{
  display: flex;
  flex: 1;
  min-height: 0;
  margin-left: 67px;
  background: #fff;
}
.stage svg{
  width: 100%;
  height: 100%;
}
.viewer .foot{
  height: 12px;
  gap: 4px;
  padding-left: 3px;
  white-space: nowrap;
}
.viewer .foot .ico{
  height: 7px;
}
.pick{
  display: flex;
  align-items: center;
  justify-content: space-between;
  color: #c4c4c4;
}
.pick select{
  appearance: none;
  flex: 1;
  min-width: 0;
}
.pick .ico{
  width: 5px;
  height: 5px;
}
.w1{width: 33px}
.w2{width: 43px}
.w3{width: 53px}

/* right column */
.side{
  display: flex;
  flex-direction: column;
  gap: 2px;
  min-height: 0;
}
.side .tabs{
  padding: 0 5px;
}
.info{
  height: 74px;
}
.values{
  display: flex;
  height: 37px;
  padding: 3px 0 0 4px;
  line-height: 7px;
}
.sample{
  width: 10px;
  height: 10px;
  margin: 6px 3px 0 0;
  background: #000;
}
.values p:nth-child(2){
  width: 41px;
}
.cross{
  width: 7px;
  margin-top: 8px;
  font-size: 9px;
}
.sel-info{
  padding: 0 3px;
  line-height: 8px;
}
.play{
  height: 29px;
}
.btns{
  display: flex;
  justify-content: center;
  gap: 5px;
  padding: 1px 0 0 4px;
}
.btns .ico{
  height: 7px;
}
.effects{
  flex: 1;
  min-height: 0;
}
.effects .search{
  margin: 2px 0 1px 4px;
}
.effects ul{
  flex: 1;
  min-height: 0;
  overflow: hidden;
  margin-right: 4px;
  font: 6px/8px "Liberation Serif", "Noto Sans CJK SC", serif;
}
.effects li{
  display: flex;
  align-items: center;
  gap: 2px;
  height: 9px;
  padding-left: 3px;
  border-bottom: 1px solid #222;
}
.effects li::before{
  content: "";
  border: 2px solid transparent;
  border-left: 4px solid #bbb;
  border-right: 0;
}
.effects .foot{
  justify-content: flex-end;
  padding-right: 7px;
}
.effects .foot .ico{
  width: 6px;
  height: 6px;
}

/* timeline */
.timeline{
  display: grid;
  grid-template-columns: 280px 1fr;
  flex: none;
  margin-top: 3px;
  background: #262626;
}
.comps{
  display: flex;
  grid-column: 1 / 3;
  height: 14px;
}
.comps a{
  display: flex;
  align-items: center;
  gap: 6px;
  padding: 0 15px 0 14px;
  color: inherit;
}
.comps .act{
  gap: 5px;
  height: 13px;
  margin: 0 5px 0 4px;
  padding: 0;
  color: #c8c8c8;
}
.comps .act .x{
  width: 3px;
}
.ctrl{
  display: flex;
  height: 18px;
  padding-left: 5px;
}
.time{
  width: 49px;
}
.time b, .time small{
  display: block;
  color: #2f97ee;
  font-size: 9px;
  line-height: 12px;
}
.time small{
  color: #2b70b0;
  font-size: 5px;
  line-height: 6px;
}
.ctrl .search{
  width: 119px;
  height: 10px;
  margin-top: 4px;
}
.modes{
  display: flex;
  gap: 8px;
  margin: 4px 0 0 10px;
}
.row{
  display: flex;
  align-items: center;
  height: 11px;
  border-bottom: 1px solid #1d1d1d;
}
.row .ico{
  width: 6px;
  height: 6px;
}
.row.head{
  background: #2b2b2b;
}
.row.prop{
  height: 10px;
}
.av{
  display: flex;
  gap: 2px;
  width: 38px;
  padding-left: 3px;
}
.av i, .sw i{
  width: 6px;
  height: 7px;
  background: #1c1c1c;
}
.av i:nth-child(2){
  margin-left: 7px;
}
.lab{
  display: flex;
  align-items: center;
  gap: 3px;
  width: 16px;
}
.head .lab{
  padding-left: 5px;
}
.row .tri{
  width: 5px;
}
.no{
  width: 18px;
  padding-left: 2px;
}
.src{
  display: flex;
  align-items: center;
  gap: 3px;
  width: 68px;
}
.src .nm{
  flex: 1;
  margin-right: 2px;
  padding-left: 1px;
  border: 1px solid transparent;
}
.sel.layer, .sel.layer .nm{
  background: #3a3a3a;
}
.sel .src .nm{
  border-color: #aaa;
}
.sw{
  display: flex;
  align-items: center;
  gap: 2px;
  width: 72px;
}
.sw em{
  width: 6px;
  font: italic 7px/8px "Liberation Serif", serif;
}
.sw .first{
  margin-left: 14px;
}
.par{
  display: flex;
  align-items: center;
  gap: 4px;
}
.par .pick{
  width: 46px;
  height: 9px;
  padding: 0 2px;
  background: #1a1a1a;
}
.nav{
  display: flex;
  gap: 3px;
  width: 68px;
  padding-left: 3px;
}
.nav .ico{
  width: 5px;
  height: 5px;
}
.pn{
  display: flex;
  align-items: center;
  gap: 4px;
  width: 73px;
}
.pn .nm{
  flex: 1;
  margin-right: 3px;
  padding-left: 2px;
}
.sel .pn .nm{
  background: #484848;
}
.row a{
  font: 6px/8px "Liberation Serif", serif;
}
.layers{
  display: flex;
  flex-direction: column;
  border-right: 1px solid #161616;
}
.layers .foot, .graph .foot{
  height: 8px;
  margin-top: auto;
}
.layers .foot{
  gap: 2px;
  padding-left: 3px;
  background: #232323;
}
.layers .foot .ico{
  width: 7px;
  height: 6px;
}
.layers .foot button{
  width: 70px;
  margin-left: 109px;
  background: #1c1c1c;
}

.graph{
  display: flex;
  flex-direction: column;
  min-width: 0;
  padding-right: 4px;
}
.navi{
  height: 9px;
  padding: 4px 0 0 2px;
  background: #1c1c1c;
}
.navi i{
  display: block;
  width: 82%;
  height: 4px;
  border: solid #3a8de0;
  border-width: 0 3px;
  border-radius: 2px;
  background: #686868;
}
.ruler{
  display: flex;
  height: 12px;
  padding-right: 7px;
  overflow: hidden;
  background: #222;
  color: #707070;
  font: 6px/7px "Liberation Serif", serif;
}
.ruler span{
  flex: 1 1 0;
  min-width: 0;
  text-align: center;
}
.ruler span:first-child{
  margin-left: -9px;
}
.ruler span::after{
  content: "";
  display: block;
  width: 1px;
  height: 4px;
  margin: 0 auto;
  background: #777;
}
.ruler .s::after{
  height: 5px;
  background: #999;
}
.area{
  height: 8px;
  padding-left: 1px;
  background: #222;
}
.area i{
  display: block;
  width: 33%;
  height: 8px;
  border: solid #3a8de0;
  border-width: 0 3px;
  border-radius: 2px;
  background: #5e5e5e;
}
.lanes{
  position: relative;
  height: 102px;
  margin-left: 3px;
  background: linear-gradient(90deg, #333 32%, #262626 32%);
}
.cache{
  height: 2px;
  background: linear-gradient(90deg, #3f7d2b 10%, #1c1c1c 10%, #1c1c1c 15%, #3f7d2b 15%);
}
.bar{
  height: 9px;
  margin-top: 1px;
  border-top: 1px solid #6a6f86;
  background: #4a5482;
}
.bar.sel{
  background: linear-gradient(#6c85dc, #4a63c0);
}
.keys{
  position: relative;
  height: 11px;
  color: #b5b5b5;
}
.keys.blue{
  color: #3a8de0;
}
.keys .ico{
  position: absolute;
  top: 3px;
  width: 5px;
  height: 5px;
  margin-left: -2px;
}
.lanes .head{
  position: absolute;
  top: -12px;
  bottom: 0;
  width: 5px;
  border-left: 1px solid #4a8fd8;
  background: linear-gradient(transparent 14px, rgba(255,255,255,.12) 14px);
}
.lanes .head svg{
  display: block;
  width: 12px;
  height: 14px;
  margin: -4px 0 0 -4px;
}
.graph .foot{
  gap: 3px;
  padding-left: 2px;
  background: #1e1e1e;
}
.hills{
  width: 8px;
  height: 5px;
}
.graph input{
  appearance: none;
  width: 26px;
  height: 1px;
  background: #666;
}
.graph input::-webkit-slider-thumb{
  appearance: none;
  width: 5px;
  height: 5px;
  border-radius: 50%;
  background: #999;
}
.graph .scroll{
  width: 74%;
  background: #323232;
}

.chat{
  position: fixed;
  right: 7px;
  bottom: 30px;
  width: 26px;
  height: 26px;
  border-radius: 50%;
  background: linear-gradient(135deg, #0a86ff, #2560ff);
}
.chat svg{
  display: block;
}
```
